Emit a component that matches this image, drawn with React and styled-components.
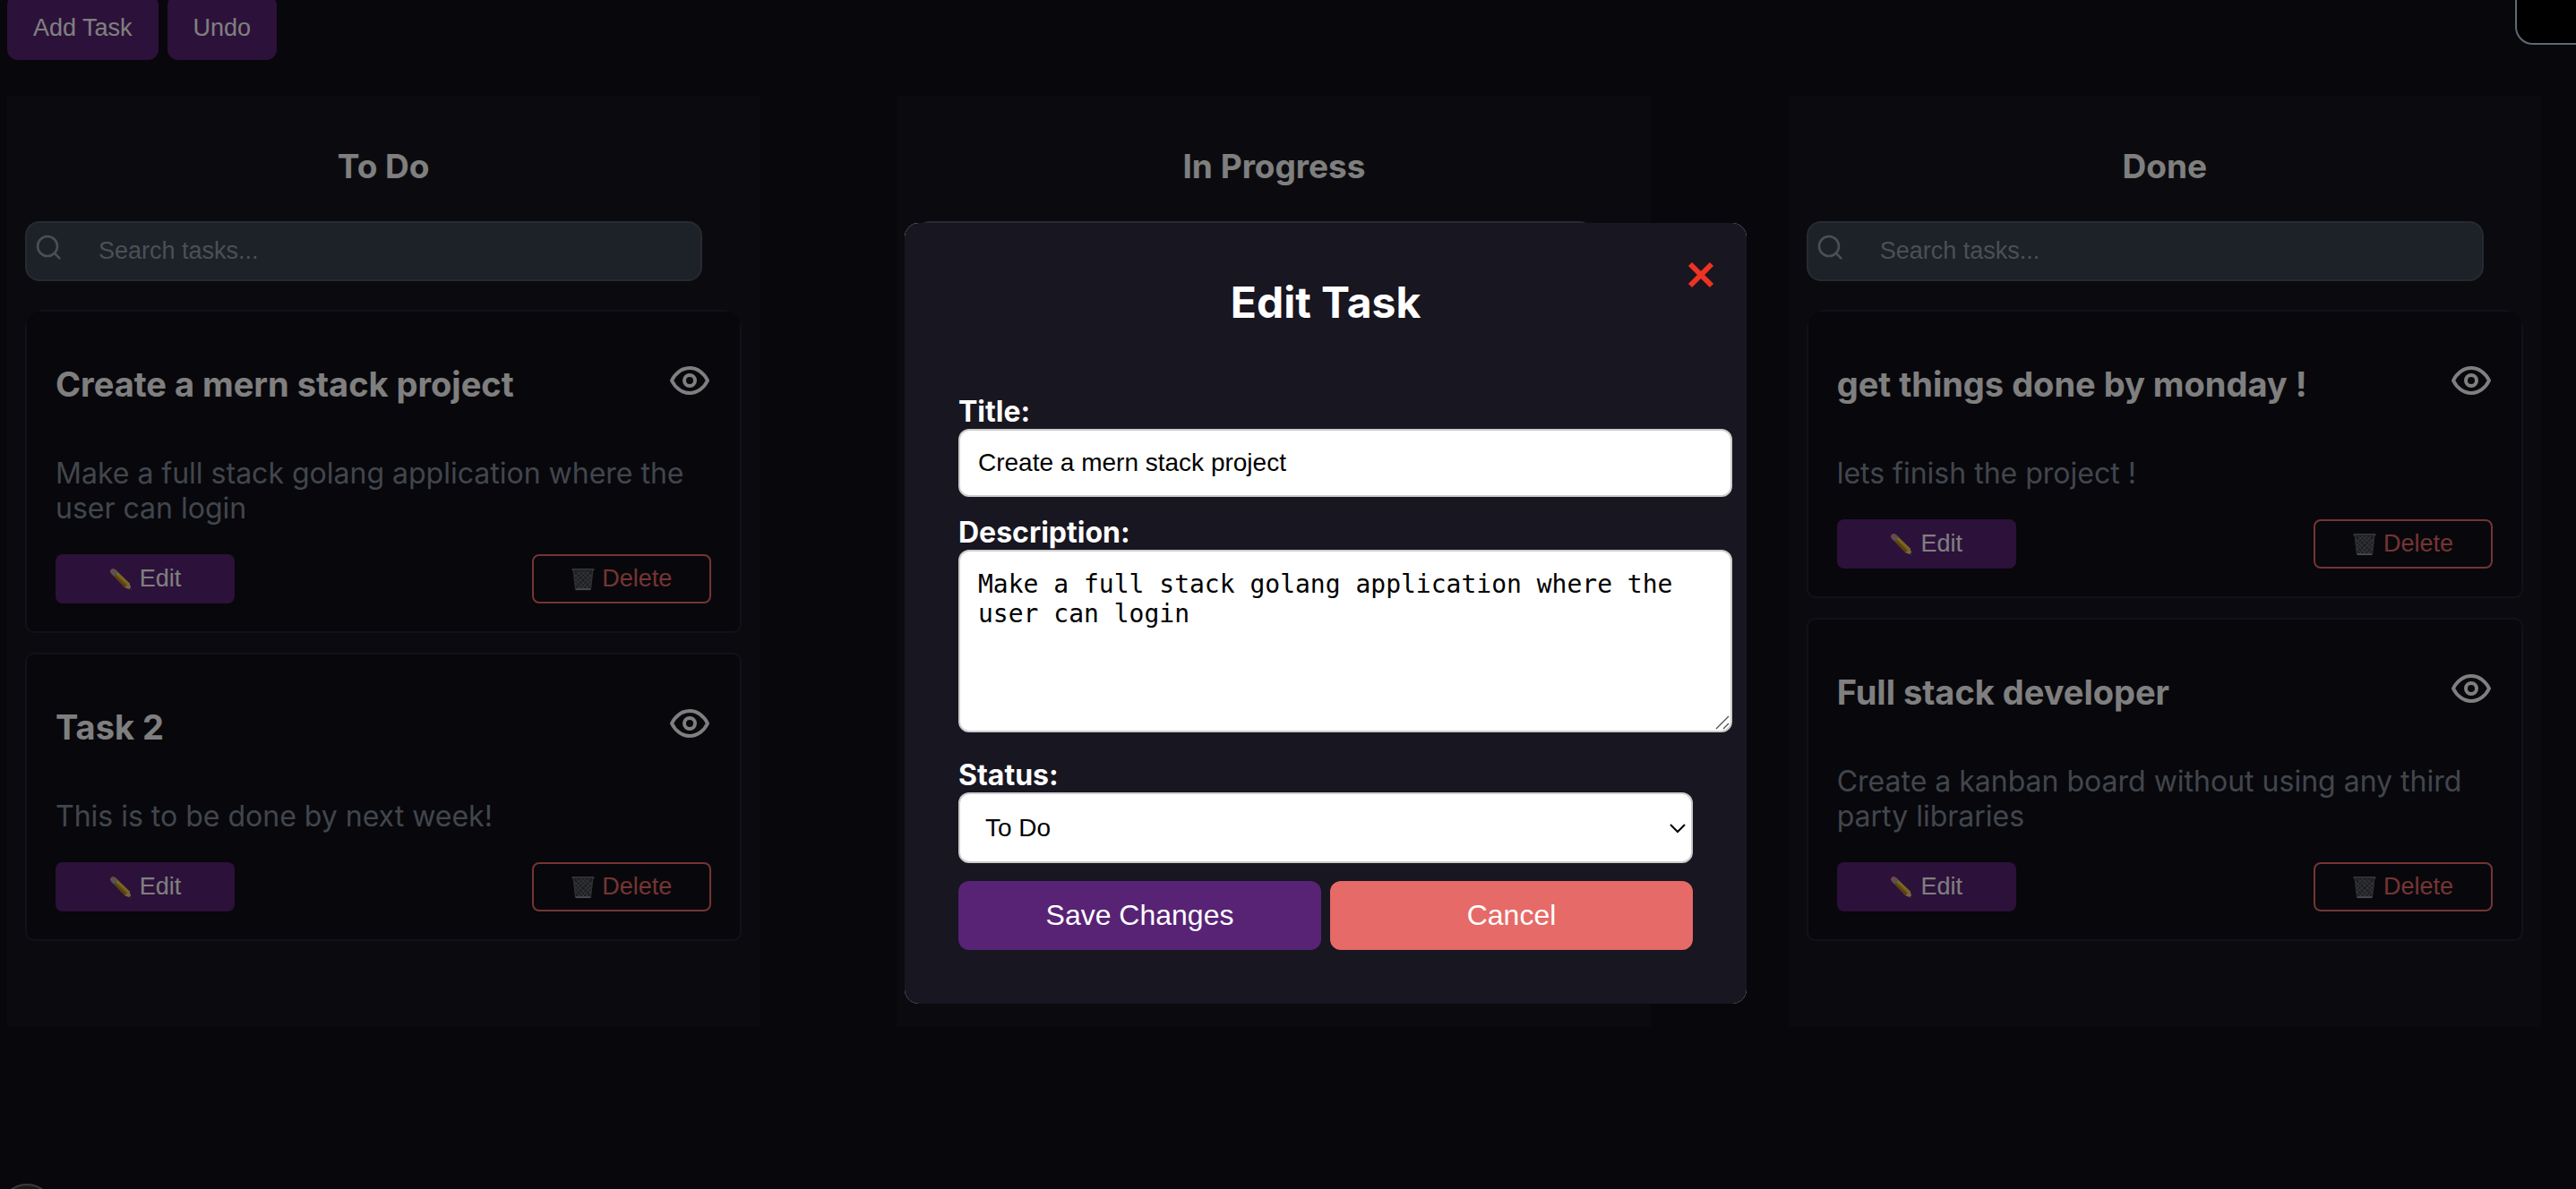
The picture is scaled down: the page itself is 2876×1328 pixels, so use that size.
import React, { useState } from "react";
import styled, { createGlobalStyle, css } from "styled-components";

const colors = {
  page: "#100f18",
  column: "#17161e",
  modal: "#181620",
  purple: "#582375",
  red: "#e66a67",
  white: "#ffffff",
  muted: "#828c9a",
};

const ui = `"Liberation Sans", Arial, sans-serif`;
const inter = `Inter, "Noto Sans", sans-serif`;

const GlobalStyle = createGlobalStyle`
  * {
    box-sizing: border-box;
  }
  body {
    margin: 0;
    overflow: hidden;
    background: ${colors.page};
    color: ${colors.white};
    font-family: ${inter};
  }
  h2, h3, p {
    margin: 0;
  }
  button, input, select {
    font-family: ${ui};
  }
`;

const Page = styled.main`
  display: flex;
  flex-direction: column;
  gap: 40px;
  min-height: 100vh;
  margin-top: -6px;
  padding: 0 39px 0 8px;
`;

const Toolbar = styled.div`
  display: flex;
  gap: 10px;
`;

const ToolbarButton = styled.button`
  height: 73px;
  padding: 2px 29px 0;
  border: 0;
  border-radius: 12px;
  background: ${colors.purple};
  color: ${colors.white};
  font-size: 27px;
`;

const Board = styled.div`
  display: grid;
  grid-template-columns: repeat(3, minmax(0, 1fr));
  column-gap: 154px;
`;

const Column = styled.section`
  min-height: 1040px;
  padding: 56px 20px 20px;
  background: ${colors.column};
`;

const ColumnTitle = styled.h2`
  margin-bottom: 38px;
  font-size: 37px;
  line-height: 46px;
  text-align: center;
`;

const SearchBox = styled.label`
  display: flex;
  align-items: center;
  width: calc(100% - 44px);
  height: 67px;
  margin-bottom: 32px;
  padding-left: 8px;
  border: 2px solid #4c5662;
  border-radius: 16px;
  background: #3a4251;
`;

const SearchIcon = styled.svg`
  flex: none;
  width: 32px;
  height: 32px;
  margin: 0 40px 10px 0;
`;

const SearchInput = styled.input`
  flex: 1;
  min-width: 0;
  padding: 0;
  border: 0;
  outline: 0;
  background: transparent;
  color: ${colors.white};
  font-size: 27px;
  &::placeholder {
    color: #969fab;
    opacity: 1;
  }
`;

const CardList = styled.div`
  display: flex;
  flex-direction: column;
  gap: 22px;
  overflow: hidden;
  border-radius: 22px 22px 0 0;
`;

const Card = styled.article`
  padding: 53px 32px 31px;
  border: 2px solid #1c2635;
  border-radius: 10px;
  background: ${colors.page};
`;

const CardHeader = styled.header`
  display: flex;
  justify-content: space-between;
  align-items: flex-start;
  margin-bottom: 52px;
`;

const CardTitle = styled.h3`
  font-size: 38px;
  line-height: 56px;
`;

const IconButton = styled.button`
  flex: none;
  display: flex;
  padding: 0;
  border: 0;
  background: transparent;
  color: ${colors.white};
`;

const CardText = styled.p`
  margin-bottom: 32px;
  color: ${colors.muted};
  font-size: 32px;
  line-height: 39px;
`;

const CardActions = styled.div`
  display: flex;
  justify-content: space-between;
`;

const CardButton = styled.button`
  display: flex;
  align-items: center;
  justify-content: center;
  gap: 8px;
  width: 200px;
  height: 55px;
  padding: 0;
  border-radius: 8px;
  font-size: 27px;
  ${(p) =>
    p.$danger
      ? css`
          border: 2px solid ${colors.red};
          background: transparent;
          color: ${colors.red};
        `
      : css`
          border: 0;
          background: ${colors.purple};
          color: ${colors.white};
        `}
`;

const HelpBubble = styled.div`
  position: fixed;
  left: 0;
  bottom: -54px;
  width: 60px;
  height: 60px;
  border: 2px solid #77777c;
  border-radius: 50%;
  background: #343337;
`;

const CornerPanel = styled.div`
  position: fixed;
  z-index: 3;
  top: -20px;
  right: -20px;
  width: 88px;
  height: 70px;
  border: 2px solid #5f6975;
  border-radius: 20px;
  background: #000000;
`;

const Overlay = styled.div`
  position: fixed;
  z-index: 2;
  inset: 0;
  display: flex;
  align-items: center;
  justify-content: center;
  padding: 42px 0 0 84px;
  background: rgba(0, 0, 0, 0.5);
`;

const ModalFrame = styled.div`
  border-radius: 16px;
  background: #ffffff;
`;

const Modal = styled.form`
  position: relative;
  display: flex;
  flex-direction: column;
  gap: 20px;
  width: 940px;
  max-width: 100%;
  padding: 60px;
  border-radius: 16px;
  background: ${colors.modal};
`;

const ModalTitle = styled.h2`
  margin-bottom: 53px;
  font-size: 48px;
  line-height: 58px;
  text-align: center;
`;

const CloseButton = styled(IconButton)`
  position: absolute;
  top: 40px;
  right: 32px;
`;

const Field = styled.div`
  display: flex;
  flex-direction: column;
  margin-right: ${(p) => (p.$wide ? "-44px" : "0")};
  margin-bottom: ${(p) => (p.$spaced ? "8px" : "0")};
`;

const FieldLabel = styled.label`
  font-size: 32px;
  font-weight: 700;
  line-height: 39px;
`;

const control = css`
  width: 100%;
  border: 2px solid #cccccc;
  border-radius: 12px;
  outline: 0;
  background: ${colors.white};
  color: #000000;
  font-size: 28px;
`;

const TextInput = styled.input`
  ${control}
  height: 76px;
  padding: 0 20px;
`;

const ControlWrap = styled.div`
  position: relative;
  display: flex;
`;

const TextArea = styled.textarea`
  ${control}
  height: 204px;
  padding: 20px;
  resize: none;
  font-family: "DejaVu Sans Mono", monospace;
  line-height: 33px;
`;

const ResizeGrip = styled.svg`
  position: absolute;
  right: 3px;
  bottom: 3px;
  width: 16px;
  height: 16px;
  pointer-events: none;
`;

const Select = styled.select`
  ${control}
  appearance: none;
  height: 79px;
  padding: 0 28px;
`;

const SelectArrow = styled.svg`
  position: absolute;
  top: 34px;
  right: 7px;
  width: 20px;
  height: 12px;
  pointer-events: none;
`;

const ModalActions = styled.div`
  display: grid;
  grid-template-columns: 1fr 1fr;
  gap: 10px;
`;

const ModalButton = styled.button`
  height: 77px;
  border: 0;
  border-radius: 12px;
  background: ${(p) => (p.$danger ? colors.red : colors.purple)};
  color: ${colors.white};
  font-size: 32px;
`;

const EyeIcon = () => (
  <svg width="48" height="48" viewBox="0 0 24 24" fill="none" stroke="currentColor" strokeWidth="2" strokeLinejoin="round">
    <path d="M2 12C4 7.8 7.8 5 12 5s8 2.8 10 7c-2 4.2-5.8 7-10 7S4 16.2 2 12Z" />
    <circle cx="12" cy="12" r="3" />
  </svg>
);

const PencilIcon = () => (
  <svg width="26" height="26" viewBox="0 0 28 28">
    <path d="M2.4 7 7 2.2 24 18.6 27 27 18.8 24Z" fill="#d9a92c" />
    <path d="M4.9 4.4 7 2.2 24 18.6l.8 2.4-2.2.1Z" fill="#f2cf4c" />
    <path d="M2.4 7 4 5.4l18.2 17.4-.4 2.3-3-1.1Z" fill="#b98020" />
    <path d="m18.8 24 5.2-5.4L27 27Z" fill="#e8c79b" />
    <path d="m24 25.9 2-2.1 1 3.2Z" fill="#26262b" />
    <path d="M5.6 10.2 10.4 5.4 7.8 2.8 2.8 7.6Z" fill="#8fb0c4" />
    <path d="M1 5.2C.6 2.6 3 .6 5.4 1L8 3.2 3.2 8Z" fill="#e58f8b" />
  </svg>
);

const TrashIcon = () => (
  <svg width="26" height="26" viewBox="0 0 28 28">
    <path d="M2 3h24l-3 23.5H5Z" fill="#3c3f45" />
    <path
      d="M3 7l18 19M3 12l13 14M4 18l7 8M6 4l18 17M11 4l13 12M16 4l9 8M25 7 7 26M25 12 12 26M24 18l-7 8M22 4 4 21M17 4 4 16M12 4 3 12"
      stroke="#74777f"
      strokeWidth="1"
    />
    <path d="M2.5 4 5 26M25.5 4 23 26" stroke="#5c6168" strokeWidth="1.4" />
    <path d="M5 26h18" stroke="#8d949c" strokeWidth="2" />
    <rect x="0.5" y="1" width="27" height="3" rx="1.5" fill="#6a6f76" />
    <path d="M3 3.4h22" stroke="#2a2c31" strokeWidth="1" />
  </svg>
);

const columns = [
  {
    id: "todo",
    title: "To Do",
    tasks: [
      {
        title: "Create a mern stack project",
        text: "Make a full stack golang application where the user can login",
      },
      { title: "Task 2", text: "This is to be done by next week!" },
    ],
  },
  { id: "progress", title: "In Progress", tasks: [] },
  {
    id: "done",
    title: "Done",
    tasks: [
      { title: "get things done by monday !", text: "lets finish the project !" },
      {
        title: "Full stack developer",
        text: "Create a kanban board without using any third party libraries",
      },
    ],
  },
];

function TaskCard({ task }) {
  return (
    <Card>
      <CardHeader>
        <CardTitle>{task.title}</CardTitle>
        <IconButton type="button" aria-label="View task">
          <EyeIcon />
        </IconButton>
      </CardHeader>
      <CardText>{task.text}</CardText>
      <CardActions>
        <CardButton type="button">
          <PencilIcon />
          Edit
        </CardButton>
        <CardButton type="button" $danger>
          <TrashIcon />
          Delete
        </CardButton>
      </CardActions>
    </Card>
  );
}

function BoardColumn({ column }) {
  return (
    <Column>
      <ColumnTitle>{column.title}</ColumnTitle>
      <SearchBox htmlFor={`search-${column.id}`}>
        <SearchIcon viewBox="0 0 32 32" fill="none" stroke="#969eaa" strokeWidth="2.6" strokeLinecap="round">
          <circle cx="15" cy="15" r="11" />
          <path d="m23 23 5.4 5.4" />
        </SearchIcon>
        <SearchInput id={`search-${column.id}`} aria-label="Search tasks" placeholder="Search tasks..." />
      </SearchBox>
      <CardList>
        {column.tasks.map((task) => (
          <TaskCard key={task.title} task={task} />
        ))}
      </CardList>
    </Column>
  );
}

function EditTaskModal({ task }) {
  const [title, setTitle] = useState(task.title);
  const [text, setText] = useState(task.text);
  const [status, setStatus] = useState("todo");
  return (
    <Overlay>
      <ModalFrame>
        <Modal role="dialog" aria-labelledby="edit-heading" onSubmit={(e) => e.preventDefault()}>
          <CloseButton type="button" aria-label="Close">
            <svg width="38" height="38" viewBox="0 0 38 38" stroke="#ed3323" strokeWidth="6">
              <path d="m7 6 24 24M31 6 7 30" />
            </svg>
          </CloseButton>
          <ModalTitle id="edit-heading">Edit Task</ModalTitle>
          <Field $wide>
            <FieldLabel htmlFor="task-title">Title:</FieldLabel>
            <TextInput id="task-title" value={title} onChange={(e) => setTitle(e.target.value)} />
          </Field>
          <Field $wide $spaced>
            <FieldLabel htmlFor="task-text">Description:</FieldLabel>
            <ControlWrap>
              <TextArea id="task-text" value={text} onChange={(e) => setText(e.target.value)} />
              <ResizeGrip viewBox="0 0 16 16" stroke="#555555" strokeWidth="1.4">
                <path d="M1 15 15 1M9 15l6-6" />
              </ResizeGrip>
            </ControlWrap>
          </Field>
          <Field>
            <FieldLabel htmlFor="task-status">Status:</FieldLabel>
            <ControlWrap>
              <Select id="task-status" value={status} onChange={(e) => setStatus(e.target.value)}>
                {columns.map((c) => (
                  <option key={c.id} value={c.id}>
                    {c.title}
                  </option>
                ))}
              </Select>
              <SelectArrow viewBox="0 0 20 12" fill="none" stroke="#000000" strokeWidth="2">
                <path d="m2 2 8 8 8-8" />
              </SelectArrow>
            </ControlWrap>
          </Field>
          <ModalActions>
            <ModalButton type="submit">Save Changes</ModalButton>
            <ModalButton type="button" $danger>
              Cancel
            </ModalButton>
          </ModalActions>
        </Modal>
      </ModalFrame>
    </Overlay>
  );
}

export default function App() {
  return (
    <>
      <GlobalStyle />
      <Page>
        <Toolbar>
          <ToolbarButton type="button">Add Task</ToolbarButton>
          <ToolbarButton type="button">Undo</ToolbarButton>
        </Toolbar>
        <Board>
          {columns.map((column) => (
            <BoardColumn key={column.id} column={column} />
          ))}
        </Board>
      </Page>
      <HelpBubble />
      <EditTaskModal task={columns[0].tasks[0]} />
      <CornerPanel />
    </>
  );
}
